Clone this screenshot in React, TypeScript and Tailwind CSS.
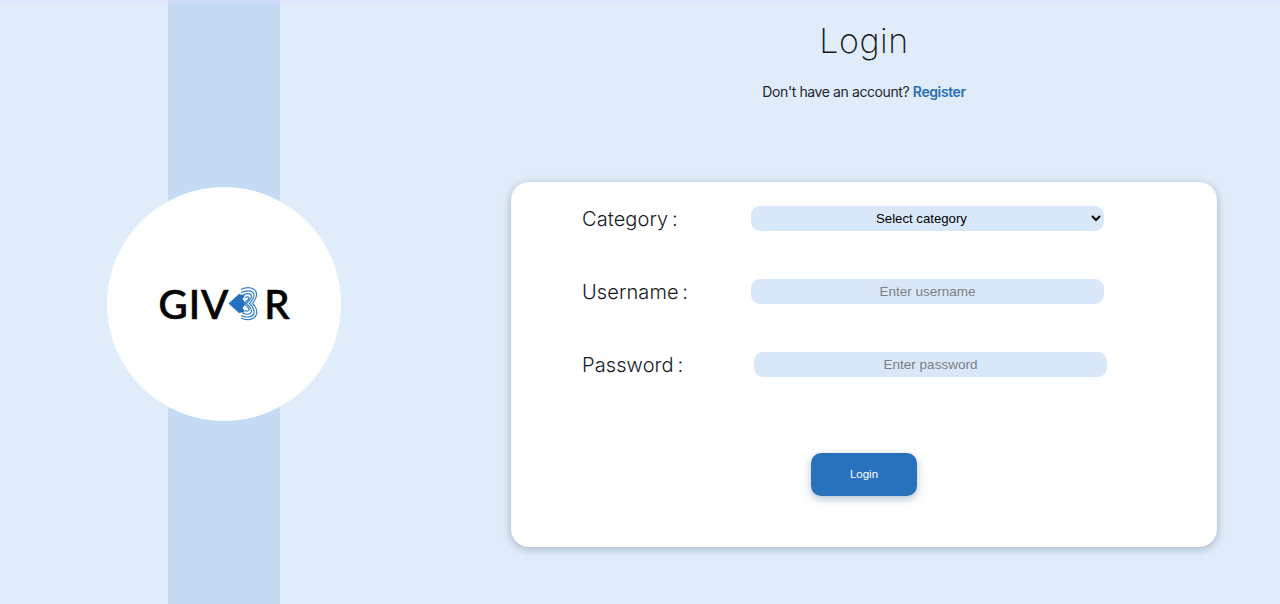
const labelCls = "h-[25px] pt-[1px] text-[20px] font-light leading-[24px] tracking-[0.1px] [word-spacing:-2px] text-[#16191f]";
const inputCls =
  "h-[25px] w-[353px] rounded-[9px] bg-[#d9e8f8] text-center text-[13.5px] text-black outline-none placeholder:text-[#7c7f84] font-['Liberation_Sans',sans-serif]";
const selectCls =
  "h-[25px] w-[353px] rounded-[9px] bg-[#d9e8f8] text-center text-[13.2px] text-black outline-none font-['Liberation_Sans',sans-serif]";

const LogoMark = () => (
  <svg width="30" height="34" viewBox="0 0 30 34" className="ml-[-1px] mr-[6px] shrink-0">
    <path d="M0.5 16.5 L11 7 L17 8.5 L14.5 12 L18 16.5 L14.5 21 L17 24.5 L11 26 Z" fill="#2470c0" />
    <g fill="none" stroke="#3280c8" strokeWidth="1.2">
      <path d="M13 2.5 C19 -0.5 28 0 28.5 7 C29 11 26.5 14 24.5 16.5 C27 19 30 22 28.5 27 C27 33 18 34 13 31" />
      <path d="M13 5.5 C18 3 25.5 3 26 8 C26.4 11 23.5 14 21.5 16.5 C24 19 27 22 26 26 C25 30.5 18 31 13 28.5" />
      <path d="M14 8.5 C18 6 23.3 6 23.5 9 C23.7 12 20 14 18.5 16.5 C20.5 19 24 21.5 23.5 24.5 C23 28 18 28 14 25.5" />
      <path d="M17 10.5 C19 9.5 21 9.5 21 11 C21 13 18 14.5 16 16.5 C18 18.5 21 20.5 21 22.5 C21 24 19 24.5 17 23.5" />
    </g>
  </svg>
);

const Row = ({ label, wide, children }: { label: string; wide?: boolean; children: React.ReactNode }) => (
  <div className="flex items-center">
    <span className={wide ? `${labelCls} w-[172px]` : `${labelCls} w-[169px]`}>{label}</span>
    {children}
  </div>
);

export default function App() {
  return (
    <div className="relative flex h-[604px] w-[1280px] overflow-hidden bg-[#e0ecf9] font-['Inter',sans-serif]">
      <div className="absolute inset-x-0 top-0 h-[4px] bg-[#e0d8ff]/30" />

      <div className="ml-[168px] flex h-full w-[112px] shrink-0 items-center justify-center bg-[#c5dbf3] pt-[3px]">
        <div className="flex h-[234px] w-[234px] shrink-0 items-center justify-center rounded-full bg-white">
          <div className="flex items-center font-['Lato',sans-serif] text-[40px] font-medium leading-none text-[#050505] [-webkit-text-stroke:0.7px_#050505]">
            <span className="tracking-[1px]">GIV</span>
            <LogoMark />
            <span>R</span>
          </div>
        </div>
      </div>

      <main className="ml-[231px] flex w-[706px] shrink-0 flex-col items-center">
        <h1 className="mt-[19px] text-[34px] font-extralight leading-[44px] tracking-[0.5px] text-[#16191f]">Login</h1>
        <p className="mt-[17px] text-[14px] leading-[24px] tracking-[-0.4px] text-[#1f2430]">
          Don't have an account? <a className="font-semibold text-[#2a6fb5]">Register</a>
        </p>

        <form className="mt-[78px] flex h-[365px] w-full flex-col rounded-[18px] bg-white pl-[71px] pt-[24px] shadow-[0_2px_8px_rgba(70,90,120,0.4)]">
          <div className="flex flex-col gap-[48px]">
            <Row label="Category :">
              <select className={selectCls} defaultValue="">
                <option value="">Select category</option>
              </select>
            </Row>
            <Row label="Username :">
              <input className={inputCls} placeholder="Enter username" />
            </Row>
            <Row label="Password :" wide>
              <input className={inputCls} type="password" placeholder="Enter password" />
            </Row>
          </div>
          <button
            type="button"
            className="mt-[76px] ml-[229px] h-[43px] w-[106px] rounded-[10px] bg-[#2872bd] font-['Liberation_Sans',sans-serif] text-[11.5px] text-white shadow-[0_3px_8px_rgba(40,80,130,0.35)]"
          >
            Login
          </button>
        </form>
      </main>
    </div>
  );
}
